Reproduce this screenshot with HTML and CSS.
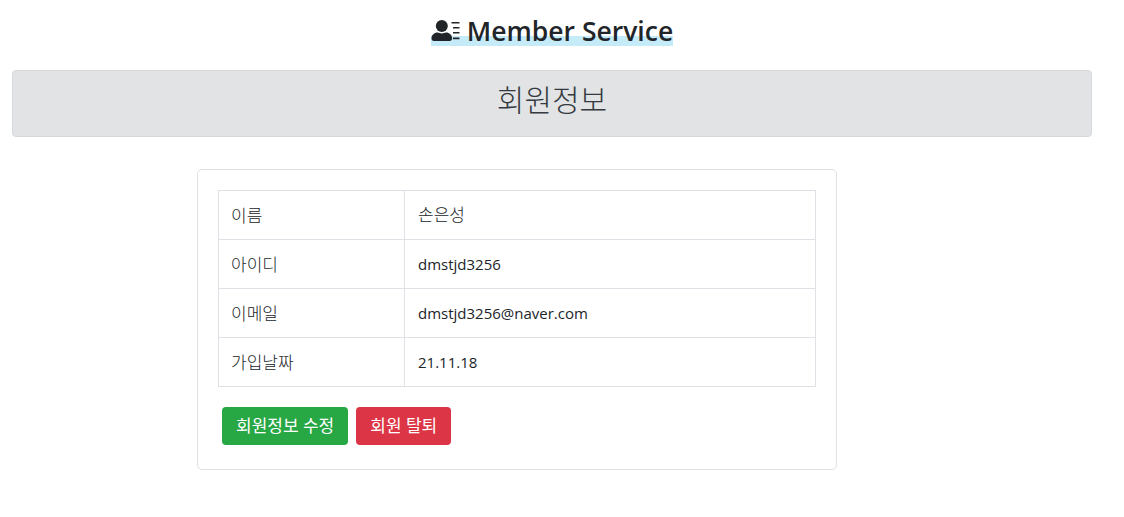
FILE: index.html
```html
<!DOCTYPE html>
<html lang="ko">
<head>
<meta charset="utf-8">
<title>Member Service</title>
<link rel="stylesheet" href="styles.css">
</head>
<body>
<div class="page">
  <header class="brand">
    <h1 class="brand-title">
      <svg class="brand-icon" viewBox="0 0 28 24" width="29" height="24" aria-hidden="true">
        <circle cx="10.300" cy="7" r="6" fill="#212529"/>
        <path d="M0 19.500c0-3.500 2.800-5.900 6-5.900 1.300 .5 2.800 .8 4.300 .8s3-.3 4.300-.8c3.200 0 6 2.400 6 5.900 0 1.500-1 2.500-2.300 2.500H2.300C1 22 0 21 0 19.500z" fill="#212529"/>
        <path d="M20 3h8v1.500h-8zM21.500 8h6.500v1.500h-6.500zM21.500 13h6.500v1.500h-6.500zM21.500 18.500h6.500v1.800h-6.500z" fill="#212529"/>
      </svg>
      <span>Member Service</span>
    </h1>
  </header>
  <section class="banner"><h2 class="banner-title">회원정보</h2></section>
  <section class="card">
    <table class="info">
      <tbody>
        <tr><th>이름</th><td class="ko">손은성</td></tr>
        <tr><th>아이디</th><td>dmstjd3256</td></tr>
        <tr><th>이메일</th><td>dmstjd3256@naver.com</td></tr>
        <tr><th>가입날짜</th><td>21.11.18</td></tr>
      </tbody>
    </table>
    <div class="actions">
      <button class="btn btn-green" type="button">회원정보 수정</button>
      <button class="btn btn-red" type="button">회원 탈퇴</button>
    </div>
  </section>
</div>
</body>
</html>
```
FILE: styles.css
```css
* { box-sizing: border-box; }
html, body { margin: 0; padding: 0; background: #fff; }
body {
  font-family: "Open Sans", "Noto Sans CJK KR", sans-serif;
  font-size: 16px;
  line-height: 1.5;
  color: #212529;
}
.page { padding: 0 32px 0 12px; display: flex; flex-direction: column; }
.brand { height: 70px; padding-top: 13px; display: flex; justify-content: center; }
.brand-title {
  margin: 0;
  height: 33px;
  font-size: 26.5px;
  line-height: 37px;
  font-weight: 600;
  display: flex;
  align-items: flex-start;
  gap: 7px;
  white-space: nowrap;
  background: linear-gradient(transparent 23px, #c5ebf9 23px);
}
.brand-icon { flex: none; margin-top: 6px; }
.banner {
  height: 67px;
  background: #e1e3e5;
  border: 1px solid #d6d8db;
  border-radius: 4px;
  text-align: center;
  padding-top: 6px;
}
.banner-title { margin: 0; font-size: 30px; line-height: 45px; font-weight: 300; color: #343a40; }
.card {
  width: 640px;
  height: 301px;
  margin: 32px 0 0 185px;
  padding: 20px;
  border: 1px solid #dfe1e5;
  border-radius: 5px;
  background: #fff;
}
.info { width: 598px; border-collapse: collapse; table-layout: fixed; }
.info th, .info td {
  height: 49px;
  padding: 2px 13px 0 12px;
  border: 1px solid #dee2e6;
  font-size: 17px;
  font-weight: 300;
  text-align: left;
  vertical-align: middle;
}
.info th { width: 186px; }
.info td { font-size: 15px; font-weight: 400; padding-top: 0; padding-left: 13px; }
.info td.ko { font-size: 17px; font-weight: 300; }
.actions { display: flex; gap: 8px; margin: 20px 0 0 4px; }
.btn {
  height: 38px;
  padding: 0 14px;
  border: 0;
  border-radius: 4px;
  color: #fff;
  font: inherit;
  font-size: 17px;
  font-weight: 400;
}
.btn-green { background: #28a745; }
.btn-red { background: #dc3545; }
```
